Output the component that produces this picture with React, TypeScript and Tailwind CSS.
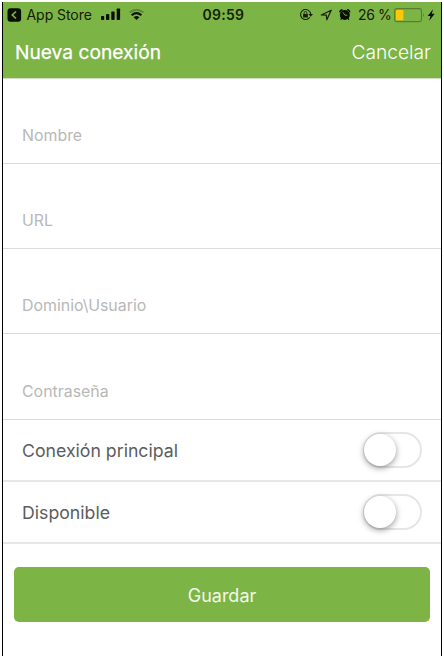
import React from "react";

function StatusBar() {
  return (
    <div className="relative h-[25px] text-[#152008]">
      <svg className="absolute inset-0 h-full w-full" viewBox="3 2 438 25" preserveAspectRatio="none">
        <rect x="7.5" y="8.3" width="13.6" height="13.4" rx="3" fill="#0a0f04" />
        <path d="M16 11.5 L12.3 15 L16 18.5" fill="none" stroke="#7cb446" strokeWidth="1.7" />
        <rect x="101" y="16" width="3.2" height="4" rx="0.8" fill="#0a0f04" />
        <rect x="106" y="14" width="3.3" height="6" rx="0.8" fill="#0a0f04" />
        <rect x="111.3" y="11.5" width="3.3" height="8.5" rx="0.8" fill="#0a0f04" />
        <rect x="116.7" y="8.5" width="3.4" height="11.5" rx="0.8" fill="#0a0f04" />
        <path d="M129.6 12.6 Q136.5 6.8 143.4 12.6" fill="none" stroke="#5c8832" strokeWidth="2" />
        <path d="M131.6 15.2 Q136.5 11 141.4 15.2" fill="none" stroke="#0a0f04" strokeWidth="2.1" />
        <path d="M133.6 17.2 Q136.5 15 139.4 17.2 L136.5 20Z" fill="#0a0f04" />
        <path d="M309.7 11.7 A5 5 0 1 0 309.8 17.2" fill="none" stroke="#17210c" strokeWidth="1.1" />
        <path d="M309.7 11.7 Q310.9 13 310.7 15" fill="none" stroke="#17210c" strokeWidth="1.1" />
        <path d="M308.4 14 L313 14 L310.7 16.7Z" fill="#17210c" />
        <rect x="303.1" y="13.9" width="4.8" height="3.6" rx="0.5" fill="#17210c" />
        <path d="M304.1 14 V12.9 A1.4 1.4 0 0 1 306.9 12.9 V14" fill="none" stroke="#17210c" strokeWidth="0.9" />
        <path d="M321.3 15 L331.2 10.2 L326.8 19.8 L326.3 15.2Z" fill="none" stroke="#17210c" strokeWidth="1.2" strokeLinejoin="round" />
        <circle cx="344.8" cy="15" r="5" fill="#0a0f04" />
        <path d="M339.8 12.4 A3 3 0 0 1 342.5 9.8 M347.1 9.8 A3 3 0 0 1 349.8 12.4" fill="none" stroke="#0a0f04" strokeWidth="1.4" />
        <path d="M341.7 18 L340.7 19.8 M347.9 18 L348.9 19.8" stroke="#0a0f04" strokeWidth="1.3" />
        <path d="M343 12.4 L344.9 15.2 L347.3 15.2" fill="none" stroke="#7cb446" strokeWidth="0.9" />
        <rect x="394.6" y="8.6" width="26.9" height="13" rx="2.4" fill="none" stroke="#56802e" strokeWidth="1.1" />
        <rect x="396" y="10" width="7.4" height="10.2" rx="0.5" fill="#ffc704" />
        <path d="M423 13 Q424.8 15 423 17Z" fill="#56802e" />
        <path d="M433 9.2 L427.7 15.9 H430.5 L429.2 20.8 L434.7 13.8 H431.8Z" fill="#0a0f04" />
      </svg>
      <span className="absolute left-[23.5px] top-[3px] text-[14px] leading-5 tracking-[-0.05px]">App Store</span>
      <span className="absolute left-[199.5px] top-[3px] text-[14px] font-semibold leading-5 tracking-[0.25px]">09:59</span>
      <span className="absolute left-[355px] top-[3px] whitespace-nowrap text-[14px] leading-5 tracking-[-0.35px]">26 %</span>
    </div>
  );
}

function Field({ label }: { label: string }) {
  return (
    <div className="flex h-[85.3px] shrink-0 items-end border-b-[1.5px] border-[#dcdcdc] pb-[17px] pl-[19px] text-[15.9px] leading-5 text-[#b8b8b8]">
      {label}
    </div>
  );
}

function SwitchRow({ label }: { label: string }) {
  return (
    <div className="flex h-[62px] shrink-0 items-center justify-between border-b-2 border-[#e7e7e7] pl-[19px] pr-[19px] text-[17.7px] text-[#5c5c5c]">
      <span className="pt-[3px]">{label}</span>
      <button className="h-[36px] w-[59px] rounded-full border-2 border-[#e6e6e6] bg-white">
        <span className="-ml-px block size-8 rounded-full bg-white shadow-[0_2px_6px_rgba(0,0,0,0.4)]" />
      </button>
    </div>
  );
}

export default function App() {
  return (
    <div className="h-[656px] w-[444px] overflow-hidden bg-white pl-[2px] pt-[2px] font-[Inter,sans-serif]">
      <div className="flex h-[654px] w-[440px] flex-col border-x border-black bg-white">
        <header className="h-[76.6px] shrink-0 border-b border-[#cfdfc0] bg-[#7cb446]">
          <StatusBar />
          <div className="flex h-[50px] items-center justify-between pl-3 pr-[10px] text-[19.2px] text-white">
            <h1 className="text-[19.2px] font-normal [-webkit-text-stroke:0.25px_white]">Nueva conexión</h1>
            <button className="font-light">Cancelar</button>
          </div>
        </header>
        <Field label="Nombre" />
        <Field label="URL" />
        <Field label="Dominio\Usuario" />
        <Field label="Contraseña" />
        <SwitchRow label="Conexión principal" />
        <SwitchRow label="Disponible" />
        <button className="mx-[11px] mt-[23.2px] h-[55px] shrink-0 rounded-[5px] bg-[#7cb446] pt-[2px] text-[18px] text-white/90">Guardar</button>
      </div>
    </div>
  );
}
